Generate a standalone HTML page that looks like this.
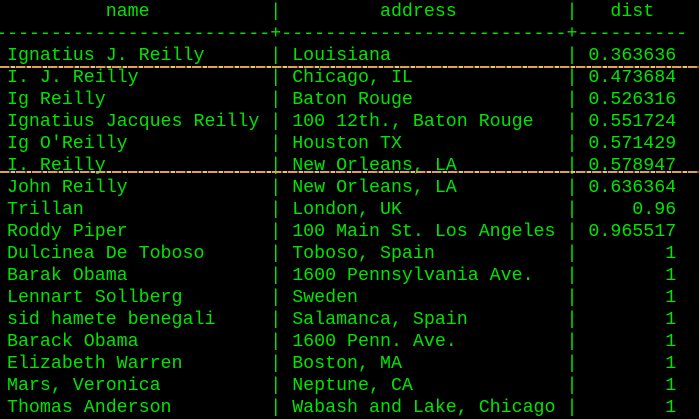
<!DOCTYPE html>
<html><head><style>
html,body{margin:0;padding:0;background:#000;width:699px;height:418px;overflow:hidden}
pre{position:absolute;left:-4px;top:1px;margin:0;font-family:"Liberation Mono",monospace;font-size:18.3px;line-height:22px;color:#00e400;white-space:pre}
.d{position:absolute;left:0;width:699px;height:2px;background:repeating-linear-gradient(90deg,#e0a050 0 9px,#6a4a20 9px 11px,#f0c070 11px 15px,#3a2a10 15px 16px)}
</style></head><body>
<pre>          name           |         address          |   dist
-------------------------+--------------------------+----------
 Ignatius J. Reilly      | Louisiana                | 0.363636
 I. J. Reilly            | Chicago, IL              | 0.473684
 Ig Reilly               | Baton Rouge              | 0.526316
 Ignatius Jacques Reilly | 100 12th., Baton Rouge   | 0.551724
 Ig O'Reilly             | Houston TX               | 0.571429
 I. Reilly               | New Orleans, LA          | 0.578947
 John Reilly             | New Orleans, LA          | 0.636364
 Trillan                 | London, UK               |     0.96
 Roddy Piper             | 100 Main St. Los Angeles | 0.965517
 Dulcinea De Toboso      | Toboso, Spain            |        1
 Barak Obama             | 1600 Pennsylvania Ave.   |        1
 Lennart Sollberg        | Sweden                   |        1
 sid hamete benegali     | Salamanca, Spain         |        1
 Barack Obama            | 1600 Penn. Ave.          |        1
 Elizabeth Warren        | Boston, MA               |        1
 Mars, Veronica          | Neptune, CA              |        1
 Thomas Anderson         | Wabash and Lake, Chicago |        1</pre>
<div class="d" style="top:66px"></div>
<div class="d" style="top:171px"></div>
</body></html>
